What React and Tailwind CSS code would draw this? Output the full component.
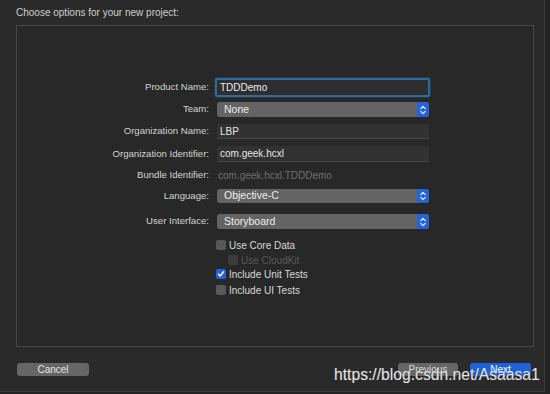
const Stepper = () => (
  <div className="w-[12px] h-full bg-[#2463db] rounded-r-[3px] flex items-center justify-center">
    <svg width="8" height="12" viewBox="0 0 8 12" fill="none" stroke="#e8eefc" strokeWidth="1.2" strokeLinecap="round" strokeLinejoin="round">
      <path d="M1.8 4.6 L4 2.4 L6.2 4.6" />
      <path d="M1.8 7.4 L4 9.6 L6.2 7.4" />
    </svg>
  </div>
);

const Popup = ({ value }) => (
  <div className="ml-[2px] w-[212px] h-full bg-[#646464] rounded-[3px] flex items-center justify-between">
    <span className="pl-[7px] text-[10.5px] text-[#ececec]">{value}</span>
    <Stepper />
  </div>
);

const TextField = ({ value }) => (
  <div className="ml-[2px] w-[212px] h-full bg-[#323232] border-b border-[#464646] flex items-center">
    <span className="pl-[3px] text-[10px] text-[#e6e6e6]">{value}</span>
  </div>
);

const Row = ({ label, className, children }) => (
  <div className={`flex items-center ${className}`}>
    <div className="w-[192px] text-right text-[9.6px] text-[#d4d4d4]">{label}</div>
    <div className="ml-[6px] w-[215px] h-full flex items-center">{children}</div>
  </div>
);

const Checkbox = ({ label, checked, disabled, className }) => (
  <div className={`flex items-center h-[10px] ${className}`}>
    <div
      className={`w-[10px] h-[10px] rounded-[2px] flex items-center justify-center ${
        checked ? 'bg-[#2463db]' : disabled ? 'bg-[#3c3c3c]' : 'bg-[#585858]'
      }`}
    >
      {checked && (
        <svg width="8" height="8" viewBox="0 0 8 8" fill="none" stroke="#ffffff" strokeWidth="1.4" strokeLinecap="round" strokeLinejoin="round">
          <path d="M1.5 4.2 L3.2 6 L6.5 1.8" />
        </svg>
      )}
    </div>
    <span className={`ml-[3px] text-[10px] ${disabled ? 'text-[#5a5a5a]' : 'text-[#d8d8d8]'}`}>{label}</span>
  </div>
);

export default function App() {
  return (
    <div
      className="relative w-[550px] h-[394px] bg-[#232323] overflow-hidden"
      style={{ fontFamily: '"Liberation Sans", Arial, sans-serif' }}
    >
      <div className="w-[545px] h-[392px] bg-[#2a2a2a] border-r border-b border-[#3b3b3b] flex flex-col">
        {/* header */}
        <div className="h-[25px] pt-[6px] pl-[16px] text-[10px] leading-[13px] text-[#cfcfcf]">
          Choose options for your new project:
        </div>

        {/* options panel */}
        <div className="ml-[16px] w-[518px] h-[322px] border border-[#474747] bg-[#282828] flex flex-col">
          <Row label="Product Name:" className="mt-[52px] h-[19px]">
            <div className="w-[215px] h-full border-2 border-[#2c6aa2] rounded-[2px] bg-[#2e2e2e] flex items-center shadow-[0_0_2px_#2c6aa2]">
              <span className="pl-[3px] text-[10px] text-[#ececec]">TDDDemo</span>
            </div>
          </Row>
          <Row label="Team:" className="mt-[5px] h-[15px]">
            <Popup value="None" />
          </Row>
          <Row label="Organization Name:" className="mt-[7px] h-[15px]">
            <TextField value="LBP" />
          </Row>
          <Row label="Organization Identifier:" className="mt-[7px] h-[16px]">
            <TextField value="com.geek.hcxl" />
          </Row>
          <Row label="Bundle Identifier:" className="mt-[6px] h-[14px]">
            <span className="pl-[3px] text-[10px] text-[#6e6e6e]">com.geek.hcxl.TDDDemo</span>
          </Row>
          <Row label="Language:" className="mt-[7px] h-[14px]">
            <Popup value="Objective-C" />
          </Row>
          <Row label="User Interface:" className="mt-[11px] h-[15px]">
            <Popup value="Storyboard" />
          </Row>

          <div className="pl-[199px] flex flex-col">
            <Checkbox label="Use Core Data" className="mt-[11px]" />
            <Checkbox label="Use CloudKit" disabled className="mt-[5px] ml-[12px]" />
            <Checkbox label="Include Unit Tests" checked className="mt-[4px]" />
            <Checkbox label="Include UI Tests" className="mt-[6px]" />
          </div>
        </div>

        {/* footer buttons */}
        <div className="mt-[16px] pl-[17px] pr-[13px] flex items-center justify-between">
          <button className="w-[72px] h-[13px] bg-[#666666] rounded-[3px] text-[10px] leading-[13px] text-[#e4e4e4]">
            Cancel
          </button>
          <div className="flex items-center gap-[12px]">
            <button className="w-[60px] h-[13px] bg-[#666666] rounded-[3px] text-[10px] leading-[13px] text-[#d8d8d8]">
              Previous
            </button>
            <button className="w-[61px] h-[13px] bg-[#1f63dc] rounded-[3px] text-[10px] leading-[13px] text-[#ffffff]">
              Next
            </button>
          </div>
        </div>
      </div>

      {/* watermark */}
      <div className="absolute left-[334px] top-[366px] text-[15.7px] leading-[18px] text-[#e2e2e2] whitespace-nowrap [text-shadow:0_0_1px_#555]">
        https://blog.csdn.net/Asaasa1
      </div>
    </div>
  );
}
